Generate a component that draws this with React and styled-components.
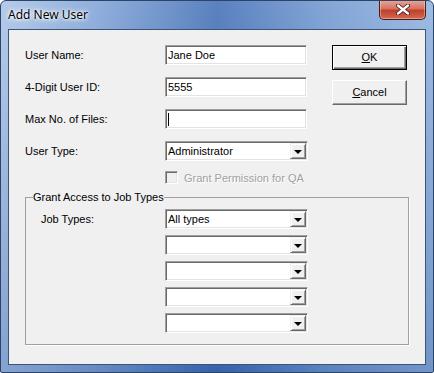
import React from 'react';
import styled, { createGlobalStyle } from 'styled-components';

const GlobalStyle = createGlobalStyle`
  html, body {
    margin: 0;
    padding: 0;
    background: #ffffff;
  }
  * {
    box-sizing: border-box;
  }
`;

const Window = styled.div`
  width: 434px;
  height: 373px;
  display: flex;
  flex-direction: column;
  padding: 0 7px 7px 7px;
  border: 1px solid #2b4468;
  border-radius: 6px 6px 2px 2px;
  background:
    linear-gradient(to bottom, rgba(255, 255, 255, 0.15), rgba(30, 70, 140, 0.25)),
    linear-gradient(to right, #a8c2e6 0%, #7ea2d6 22%, #3e6cb4 50%, #6e96cf 75%, #8eb0dd 100%);
  font-family: "Liberation Sans", Arial, sans-serif;
  font-size: 11px;
  color: #000;
  overflow: hidden;
`;

const TitleBar = styled.div`
  height: 28px;
  flex: none;
  display: flex;
  justify-content: space-between;
  align-items: flex-start;
`;

const Title = styled.span`
  margin: 6px 0 0 0;
  font-family: "Noto Sans", "Open Sans", sans-serif;
  font-size: 12px;
  line-height: 16px;
  color: #000;
  text-shadow: 0 0 6px #fff, 0 0 4px #fff, 0 0 2px #fff;
`;

const CloseButton = styled.div`
  width: 47px;
  height: 20px;
  margin: -1px 0 0 0;
  border: 1px solid #4a1a14;
  border-top: none;
  border-radius: 0 0 5px 5px;
  background: linear-gradient(to bottom, #e9a99b 0%, #d6735f 45%, #c0402b 55%, #d26a52 100%);
  box-shadow: inset 0 0 0 1px rgba(255, 255, 255, 0.35);
  display: flex;
  align-items: center;
  justify-content: center;
`;

const Client = styled.div`
  flex: 1;
  border: 1px solid #3e5474;
  background: #f0f0f0;
  padding: 15px 0 0 16px;
  display: flex;
  flex-direction: column;
`;

const TopSection = styled.div`
  display: flex;
  align-items: flex-start;
`;

const Fields = styled.div`
  display: flex;
  flex-direction: column;
  gap: 12px;
`;

const Row = styled.div`
  display: flex;
  align-items: center;
  height: 20px;
`;

const Label = styled.span`
  width: ${({ $width }) => $width || 140}px;
  line-height: 20px;
  white-space: nowrap;
`;

const Sunken = styled.div`
  position: relative;
  width: ${({ $width }) => $width}px;
  height: 20px;
  background: #fff;
  border: 1px solid;
  border-color: #a0a0a0 #ffffff #ffffff #a0a0a0;
  box-shadow: inset 1px 1px 0 #696969, inset -1px -1px 0 #e3e3e3;
  display: flex;
  align-items: center;
  padding-left: 2px;
  line-height: 16px;
  white-space: nowrap;
`;

const Caret = styled.span`
  width: 1px;
  height: 13px;
  background: #000;
`;

const DropButton = styled.div`
  margin-left: auto;
  margin-right: 1px;
  width: 16px;
  height: 16px;
  background: #f0f0f0;
  border: 1px solid;
  border-color: #f0f0f0 #696969 #696969 #f0f0f0;
  box-shadow: inset 1px 1px 0 #fff, inset -1px -1px 0 #a0a0a0;
  display: flex;
  align-items: center;
  justify-content: center;
`;

const Arrow = styled.span`
  width: 0;
  height: 0;
  border-left: 4px solid transparent;
  border-right: 4px solid transparent;
  border-top: 4px solid #000;
  margin-top: 1px;
`;

const Buttons = styled.div`
  margin-left: 24px;
  display: flex;
  flex-direction: column;
  gap: 10px;
`;

const Button = styled.div`
  width: 75px;
  height: 25px;
  background: #f0f0f0;
  border: 1px solid;
  border-color: ${({ $default }) => ($default ? '#000' : '#fff #696969 #696969 #fff')};
  box-shadow: ${({ $default }) =>
    $default
      ? 'inset 1px 1px 0 #fff, inset -1px -1px 0 #696969, inset -2px -2px 0 #a0a0a0'
      : 'inset -1px -1px 0 #a0a0a0'};
  display: flex;
  align-items: center;
  justify-content: center;
  line-height: 13px;
`;

const CheckRow = styled.div`
  display: flex;
  align-items: center;
  margin: 10px 0 0 140px;
  height: 13px;
  gap: 6px;
  color: #a0a0a0;
  text-shadow: 1px 1px 0 #fff;
`;

const CheckBox = styled.span`
  width: 13px;
  height: 13px;
  background: #f0f0f0;
  border: 1px solid;
  border-color: #a0a0a0 #fff #fff #a0a0a0;
  box-shadow: inset 1px 1px 0 #696969, inset -1px -1px 0 #e3e3e3;
`;

const Group = styled.fieldset`
  width: 384px;
  margin: 7px 0 0 0;
  padding: 5px 0 11px 0;
  border: 1px solid #a0a0a0;
  box-shadow: 1px 1px 0 #fff;
  min-width: 0;
`;

const Legend = styled.legend`
  margin-left: 7px;
  padding: 0;
  line-height: 13px;
  font-size: 11px;
`;

const GroupBody = styled.div`
  display: flex;
  align-items: flex-start;
  padding-left: 15px;
`;

const ComboList = styled.div`
  display: flex;
  flex-direction: column;
  gap: 6px;
`;

function Combo({ value }) {
  return (
    <Sunken $width={143}>
      {value}
      <DropButton>
        <Arrow />
      </DropButton>
    </Sunken>
  );
}

export default function App() {
  return (
    <>
      <GlobalStyle />
      <Window>
        <TitleBar>
          <Title>Add New User</Title>
          <CloseButton>
            <svg width="14" height="11" viewBox="0 0 14 11">
              <path d="M2 1.5 L12 9.5 M12 1.5 L2 9.5" stroke="#3a1410" strokeWidth="4" strokeLinecap="round" />
              <path d="M2 1.5 L12 9.5 M12 1.5 L2 9.5" stroke="#fff" strokeWidth="2.4" strokeLinecap="round" />
            </svg>
          </CloseButton>
        </TitleBar>
        <Client>
          <TopSection>
            <Fields>
              <Row>
                <Label>User Name:</Label>
                <Sunken $width={142}>Jane Doe</Sunken>
              </Row>
              <Row>
                <Label>4-Digit User ID:</Label>
                <Sunken $width={142}>5555</Sunken>
              </Row>
              <Row>
                <Label>Max No. of Files:</Label>
                <Sunken $width={142}>
                  <Caret />
                </Sunken>
              </Row>
              <Row>
                <Label>User Type:</Label>
                <Combo value="Administrator" />
              </Row>
            </Fields>
            <Buttons>
              <Button $default>
                <span><u>O</u>K</span>
              </Button>
              <Button>
                <span><u>C</u>ancel</span>
              </Button>
            </Buttons>
          </TopSection>
          <CheckRow>
            <CheckBox />
            <span>Grant Permission for QA</span>
          </CheckRow>
          <Group>
            <Legend>Grant Access to Job Types</Legend>
            <GroupBody>
              <Label $width={124}>Job Types:</Label>
              <ComboList>
                <Combo value="All types" />
                <Combo />
                <Combo />
                <Combo />
                <Combo />
              </ComboList>
            </GroupBody>
          </Group>
        </Client>
      </Window>
    </>
  );
}
